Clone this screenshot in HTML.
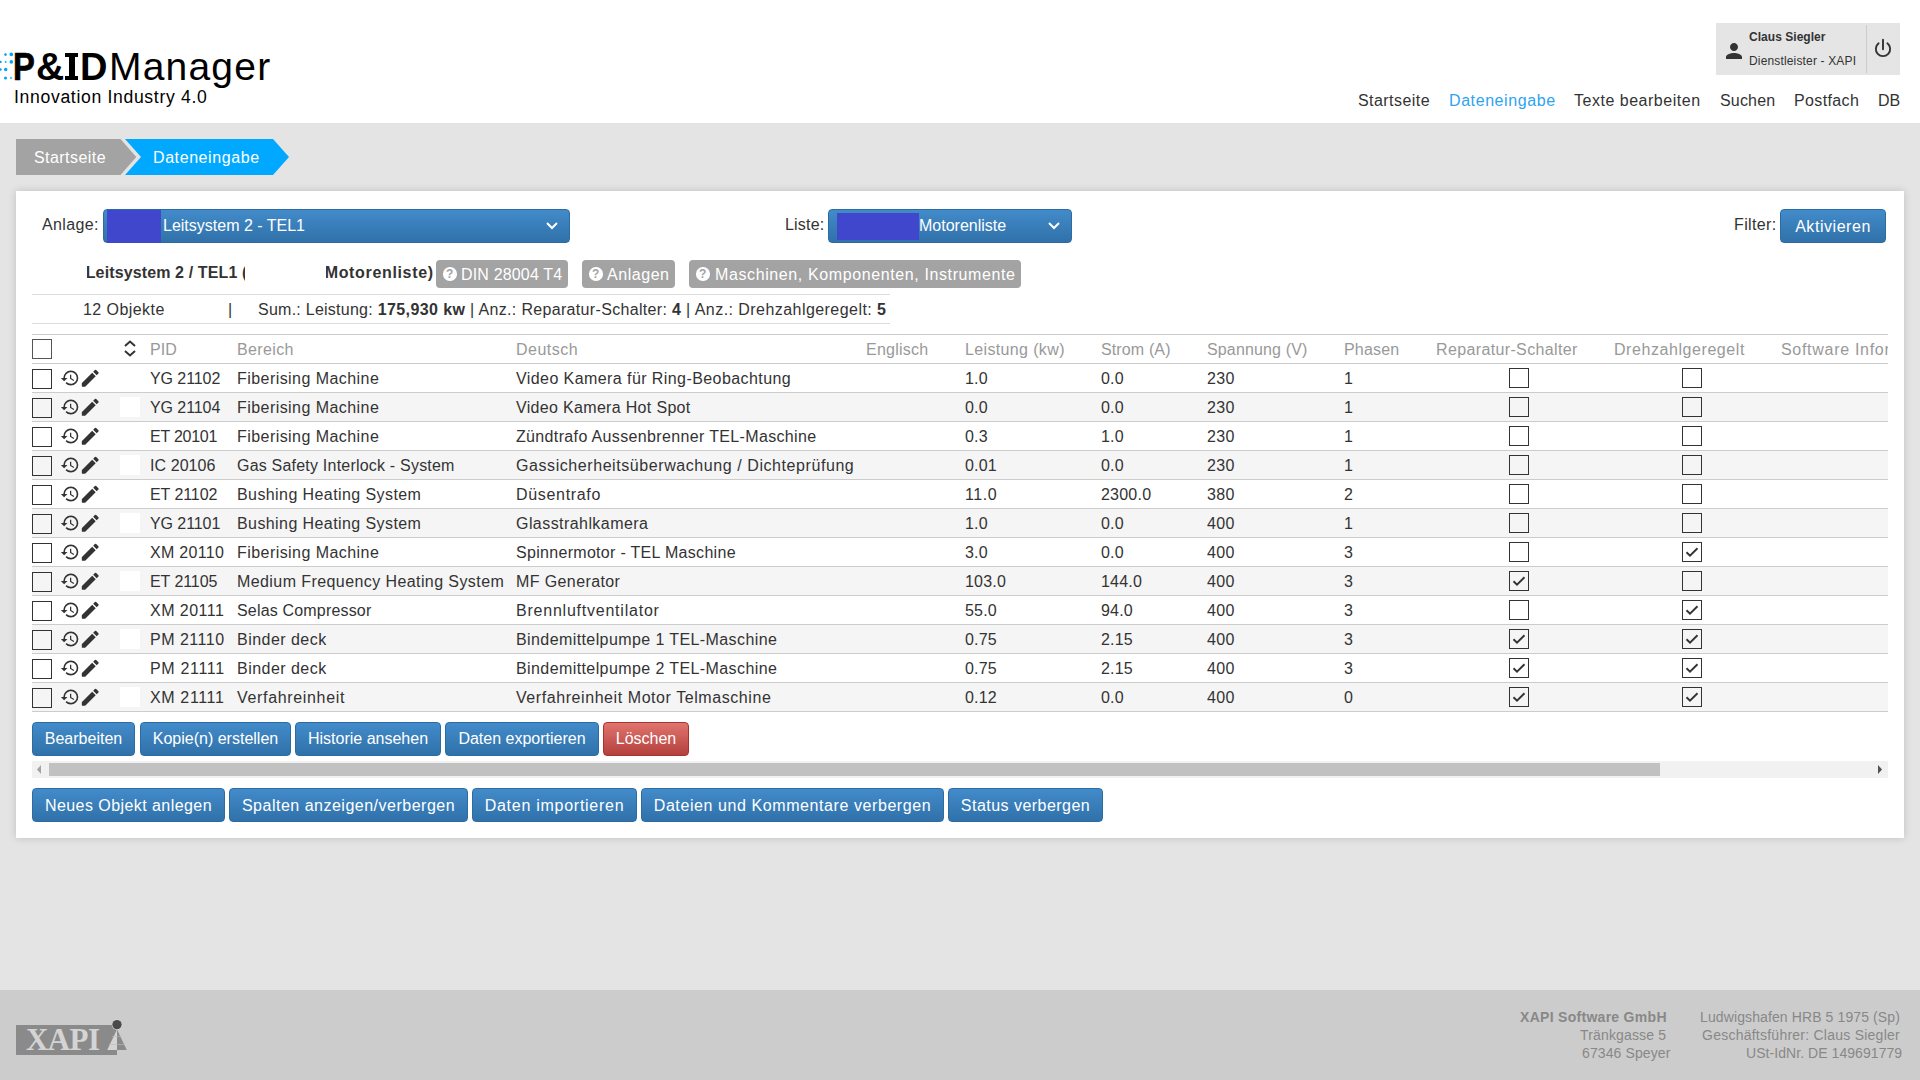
<!DOCTYPE html>
<html><head><meta charset="utf-8">
<style>
*{box-sizing:border-box;margin:0;padding:0}
html,body{width:1920px;height:1080px;overflow:hidden}
body{position:relative;background:#e4e4e4;font-family:"Liberation Sans",sans-serif;color:#333;font-size:16px}
.abs{position:absolute}
#header{position:absolute;left:0;top:0;width:1920px;height:123px;background:#fff}
.logo1{position:absolute;left:109px;top:45px;font-size:39px;line-height:44px;color:#000;white-space:nowrap}
.lg{position:absolute;top:45.3px;font-size:38px;line-height:44px;font-weight:bold;color:#000}
.logo2{position:absolute;left:14px;top:86.5px;font-size:17.6px;line-height:20px;color:#000;white-space:nowrap}
.user{position:absolute;left:1716px;top:23px;width:184px;height:52px;background:#e5e5e5}
.user .nm{position:absolute;left:33px;top:5.8px;font-size:12px;line-height:16px;color:#333;white-space:nowrap}
.user .rl{position:absolute;left:33px;top:29.7px;font-size:12px;line-height:16px;color:#333;white-space:nowrap}
.user .div{position:absolute;left:150px;top:2px;width:1px;height:48px;background:#ccc}
.nav{position:absolute;top:91px;font-size:16px;line-height:20px;color:#333;white-space:nowrap}
.bc{position:absolute;top:140px;height:36px;line-height:36px;color:#fff;font-size:16px;white-space:nowrap}
#panel{position:absolute;left:16px;top:191px;width:1888px;height:647px;background:#fff;box-shadow:0 0 8px rgba(0,0,0,.16)}
.lbl{position:absolute;font-size:16px;line-height:20px;color:#333;white-space:nowrap}
.sel{position:absolute;top:209px;height:34px;border:1px solid #2d6ca2;border-radius:4px;background:linear-gradient(#428bca,#3071a9);color:#fff;font-size:16px;line-height:32px;white-space:nowrap}
.sel .blk{position:absolute;top:0;height:32px;background:#4047cc}
.sel .chev{position:absolute;top:11px}
.btn{position:absolute;height:34px;border:1px solid #2d6ca2;border-radius:4px;background:linear-gradient(#428bca 0%,#3071a9 100%);color:#fff;font-size:16px;line-height:32px;text-align:center;white-space:nowrap}
.btn.nt{line-height:34px}
.btn.red{border-color:#a8332f;background:linear-gradient(#e0746f,#b4403c)}
.tag{position:absolute;top:260px;height:28px;background:#a3a3a3;border-radius:4px;color:#fff;font-size:16px;line-height:28px;white-space:nowrap}
.q{position:absolute;left:7px;top:7px;width:13.5px;height:13.5px;border-radius:50%;background:#fff;color:#a3a3a3;font-size:12px;line-height:14px;text-align:center;font-weight:bold}
.hl{position:absolute;height:1px;background:#ddd}
.row{position:absolute;left:32px;width:1856px;height:29px;border-bottom:1px solid #ccc;background:#fff}
.row.alt{background:#f5f5f5}
.th{position:absolute;top:336px;line-height:28px;font-size:16px;color:#999;white-space:nowrap}
.td{position:absolute;margin-top:0.7px;line-height:28px;font-size:16px;color:#333;white-space:nowrap}
.cb{position:absolute;width:20px;height:20px;border:1.5px solid #333;background:transparent}
.cb svg{position:absolute;left:-1.5px;top:-1.5px}
.ic{position:absolute}
.ic svg{display:block}
.wsq{position:absolute;left:120px;width:20px;height:20px;background:#fff}
#footer{position:absolute;left:0;top:990px;width:1920px;height:90px;background:#ccc}
.ft{position:absolute;font-size:14px;line-height:18px;color:#888;white-space:nowrap}
</style></head><body>
<div id="header">
  <svg class="abs" style="left:0;top:50px" width="14" height="32" viewBox="0 0 14 32">
    <g fill="#00a3fa">
    <circle cx="5.5" cy="4.6" r="1.3"/><circle cx="11.3" cy="4.4" r="1.8"/>
    <circle cx="0.5" cy="11.9" r="1.2"/><circle cx="5.7" cy="11.9" r="0.9"/><circle cx="11.3" cy="11.9" r="1.8"/>
    <circle cx="0.5" cy="19.5" r="1.2"/><circle cx="5.7" cy="19.5" r="1.7"/>
    <circle cx="5.5" cy="27.9" r="1.5"/><circle cx="11" cy="27.9" r="0.9"/>
    </g>
  </svg>
  <span class="lg" style="left:13.3px;transform:scaleX(0.86);transform-origin:0 0;-webkit-text-stroke:0.7px #000">P</span>
  <span class="lg" style="left:35.5px;transform:scaleX(1.03);transform-origin:0 0">&amp;</span>
  <div class="abs" style="left:65px;top:52.5px;width:13px;height:4px;background:#000"></div>
  <div class="abs" style="left:68.5px;top:52.5px;width:6px;height:27px;background:#000"></div>
  <div class="abs" style="left:65px;top:75.5px;width:13px;height:4px;background:#000"></div>
  <span class="lg" style="left:80px">D</span>
  <div class="logo1"><span style="letter-spacing:1.2px">Manager</span></div>
  <div class="logo2"><span style="letter-spacing:0.670px">Innovation Industry 4.0</span></div>
  <div class="user">
    <svg class="abs" style="left:5.8px;top:16px" width="24" height="24" viewBox="0 0 24 24"><path fill="#333" d="M12 12c2.21 0 4-1.79 4-4s-1.79-4-4-4-4 1.79-4 4 1.79 4 4 4zm0 2c-2.67 0-8 1.34-8 4v2h16v-2c0-2.66-5.33-4-8-4z"/></svg>
    <div class="nm"><span style="letter-spacing:0.036px;font-weight:700">Claus Siegler</span></div>
    <div class="rl"><span style="letter-spacing:0.157px">Dienstleister - XAPI</span></div>
    <div class="div"></div>
    <svg class="abs" style="left:155px;top:13.8px" width="24" height="24" viewBox="0 0 24 24"><path d="M7.62 6.35 A7.15 7.15 0 1 0 16.38 6.35" stroke="#333" stroke-width="1.9" fill="none" stroke-linecap="round"/><line x1="12" y1="2.6" x2="12" y2="12.2" stroke="#333" stroke-width="1.9" stroke-linecap="round"/></svg>
  </div>
  <div class="nav" style="left:1358px"><span style="letter-spacing:0.439px">Startseite</span></div>
  <div class="nav" style="left:1449px;color:#2ea3f2"><span style="letter-spacing:0.584px">Dateneingabe</span></div>
  <div class="nav" style="left:1574px"><span style="letter-spacing:0.515px">Texte bearbeiten</span></div>
  <div class="nav" style="left:1720px"><span style="letter-spacing:0.177px">Suchen</span></div>
  <div class="nav" style="left:1794px"><span style="letter-spacing:0.370px">Postfach</span></div>
  <div class="nav" style="left:1878px"><span style="letter-spacing:-0.147px">DB</span></div>
</div>
<svg class="abs" style="left:16px;top:139px" width="276" height="36" viewBox="0 0 276 36">
  <polygon points="0,0 104.5,0 120.3,18 104.5,36 0,36" fill="#a3a3a3"/>
  <polygon points="109,0 257,0 273,18 257,36 109,36 125,18" fill="#00a9ff"/>
</svg>
<div class="bc" style="left:34px"><span style="letter-spacing:0.439px">Startseite</span></div>
<div class="bc" style="left:153px"><span style="letter-spacing:0.584px">Dateneingabe</span></div>

<div id="panel"></div>
<div class="lbl" style="left:42px;top:215px"><span style="letter-spacing:0.350px">Anlage:</span></div>
<div class="sel" style="left:103px;width:467px">
  <div class="blk" style="left:2.7px;width:54.3px;top:-0.5px;height:33px"></div>
  <span class="abs" style="left:59px;top:0">Leitsystem 2 - TEL1</span>
  <svg class="chev" style="left:441px" width="14" height="10" viewBox="0 0 14 10"><path d="M2 2 L7 7 L12 2" stroke="#fff" stroke-width="2" fill="none"/></svg>
</div>
<div class="lbl" style="left:785px;top:215px"><span style="letter-spacing:0.204px">Liste:</span></div>
<div class="sel" style="left:828px;width:244px">
  <div class="blk" style="left:8px;width:82px;top:2.9px;height:27.1px"></div>
  <span class="abs" style="left:90px;top:0">Motorenliste</span>
  <svg class="chev" style="left:218px" width="14" height="10" viewBox="0 0 14 10"><path d="M2 2 L7 7 L12 2" stroke="#fff" stroke-width="2" fill="none"/></svg>
</div>
<div class="lbl" style="left:1734px;top:215px"><span style="letter-spacing:0.376px">Filter:</span></div>
<div class="btn nt" style="left:1780px;top:209px;width:106px"><span style="letter-spacing:0.545px">Aktivieren</span></div>

<div class="lbl" style="left:86.5px;top:263px;width:158px;height:22px;overflow:hidden"><span class="abs" style="left:-0.8px;top:0"><span style="letter-spacing:0.125px;font-weight:700">Leitsystem 2 / TEL1 (</span></span></div>
<div class="lbl" style="left:325.5px;top:263px;width:110px;overflow:hidden;height:22px"><span class="abs" style="left:-0.8px;top:0"><span style="letter-spacing:0.656px;font-weight:700">Motorenliste)</span></span></div>
<div class="tag" style="left:436px;width:132px"><div class="q">?</div><span class="abs" style="left:25px;top:0.5px"><span style="letter-spacing:0.162px">DIN 28004 T4</span></span></div>
<div class="tag" style="left:582px;width:93px"><div class="q">?</div><span class="abs" style="left:25px;top:0.5px"><span style="letter-spacing:0.542px">Anlagen</span></span></div>
<div class="tag" style="left:689px;width:332px"><div class="q">?</div><span class="abs" style="left:26px;top:0.5px"><span style="letter-spacing:0.610px">Maschinen, Komponenten, Instrumente</span></span></div>

<div class="hl" style="left:32px;top:294px;width:858px"></div>
<div class="hl" style="left:32px;top:323px;width:858px"></div>
<div class="lbl" style="left:83px;top:300px"><span style="letter-spacing:0.435px">12 Objekte</span></div>
<div class="lbl" style="left:228px;top:300px">|</div>
<div class="lbl" style="left:258px;top:300px"><span style="letter-spacing:0.253px">Sum.: Leistung: </span><span style="letter-spacing:0.403px;font-weight:700">175,930 kw</span><span style="letter-spacing:0.331px"> | Anz.: Reparatur-Schalter: </span><span style="letter-spacing:0.254px;font-weight:700">4</span><span style="letter-spacing:0.446px"> | Anz.: Drehzahlgeregelt: </span><span style="letter-spacing:0.254px;font-weight:700">5</span></div>

<div class="hl" style="left:32px;top:334px;width:1856px;background:#ccc"></div>
<div class="hl" style="left:32px;top:363px;width:1856px;background:#ccc"></div>
<div class="cb" style="left:32px;top:339px;border-color:#555"></div>
<svg class="abs" style="left:123px;top:340px" width="14" height="17" viewBox="0 0 14 17"><path d="M2 6 L7 1.5 L12 6 M2 11 L7 15.5 L12 11" stroke="#333" stroke-width="2" fill="none"/></svg>
<div class="th" style="left:150px"><span style="letter-spacing:0.056px">PID</span></div>
<div class="th" style="left:237px"><span style="letter-spacing:0.364px">Bereich</span></div>
<div class="th" style="left:516px"><span style="letter-spacing:0.484px">Deutsch</span></div>
<div class="th" style="left:866px"><span style="letter-spacing:0.234px">Englisch</span></div>
<div class="th" style="left:965px"><span style="letter-spacing:0.360px">Leistung (kw)</span></div>
<div class="th" style="left:1101px"><span style="letter-spacing:0.128px">Strom (A)</span></div>
<div class="th" style="left:1207px"><span style="letter-spacing:0.147px">Spannung (V)</span></div>
<div class="th" style="left:1344px"><span style="letter-spacing:0.171px">Phasen</span></div>
<div class="th" style="left:1436px"><span style="letter-spacing:0.363px">Reparatur-Schalter</span></div>
<div class="th" style="left:1614px"><span style="letter-spacing:0.566px">Drehzahlgeregelt</span></div>
<div class="th" style="left:1781px;width:107px;overflow:hidden"><span style="letter-spacing:0.703px">Software Informationen</span></div>
<div class="row" style="top:364px"></div>
<div class="cb" style="left:32px;top:369px"></div>
<div class="ic" style="left:60.1px;top:368.1px"><svg width="20" height="20" viewBox="0 0 24 24"><path fill="#333" d="M13 3a9 9 0 0 0-9 9H1l3.89 3.89.07.14L9 12H6c0-3.87 3.13-7 7-7s7 3.13 7 7-3.13 7-7 7c-1.93 0-3.68-.79-4.94-2.06l-1.42 1.42A8.954 8.954 0 0 0 13 21a9 9 0 0 0 0-18zm-1 5v5l4.28 2.54.72-1.21-3.5-2.08V8H12z"/></svg></div>
<div class="ic" style="left:79.3px;top:367.2px"><svg width="22.5" height="22.5" viewBox="0 0 24 24"><path fill="#333" d="M3 17.46v3.04c0 .28.22.5.5.5h3.04c.13 0 .26-.05.35-.15L17.81 9.94l-3.75-3.75L3.15 17.1c-.1.1-.15.22-.15.36zM20.71 7.04a1 1 0 0 0 0-1.41l-2.34-2.34a1 1 0 0 0-1.41 0l-1.83 1.83 3.75 3.75 1.83-1.83z"/></svg></div>
<div class="td" style="left:150px;top:364px"><span style="letter-spacing:-0.080px">YG 21102</span></div>
<div class="td" style="left:237px;top:364px"><span style="letter-spacing:0.443px">Fiberising Machine</span></div>
<div class="td" style="left:516px;top:364px"><span style="letter-spacing:0.422px">Video Kamera für Ring-Beobachtung</span></div>
<div class="td" style="left:965px;top:364px"><span style="letter-spacing:0.175px">1.0</span></div>
<div class="td" style="left:1101px;top:364px"><span style="letter-spacing:0.175px">0.0</span></div>
<div class="td" style="left:1207px;top:364px"><span style="letter-spacing:0.380px">230</span></div>
<div class="td" style="left:1344px;top:364px"><span style="letter-spacing:0.254px">1</span></div>
<div class="cb" style="left:1509px;top:368px"></div>
<div class="cb" style="left:1682px;top:368px"></div>
<div class="row alt" style="top:393px"></div>
<div class="cb" style="left:32px;top:398px"></div>
<div class="ic" style="left:60.1px;top:397.1px"><svg width="20" height="20" viewBox="0 0 24 24"><path fill="#333" d="M13 3a9 9 0 0 0-9 9H1l3.89 3.89.07.14L9 12H6c0-3.87 3.13-7 7-7s7 3.13 7 7-3.13 7-7 7c-1.93 0-3.68-.79-4.94-2.06l-1.42 1.42A8.954 8.954 0 0 0 13 21a9 9 0 0 0 0-18zm-1 5v5l4.28 2.54.72-1.21-3.5-2.08V8H12z"/></svg></div>
<div class="ic" style="left:79.3px;top:396.2px"><svg width="22.5" height="22.5" viewBox="0 0 24 24"><path fill="#333" d="M3 17.46v3.04c0 .28.22.5.5.5h3.04c.13 0 .26-.05.35-.15L17.81 9.94l-3.75-3.75L3.15 17.1c-.1.1-.15.22-.15.36zM20.71 7.04a1 1 0 0 0 0-1.41l-2.34-2.34a1 1 0 0 0-1.41 0l-1.83 1.83 3.75 3.75 1.83-1.83z"/></svg></div>
<div class="wsq" style="top:397px"></div>
<div class="td" style="left:150px;top:393px"><span style="letter-spacing:-0.080px">YG 21104</span></div>
<div class="td" style="left:237px;top:393px"><span style="letter-spacing:0.443px">Fiberising Machine</span></div>
<div class="td" style="left:516px;top:393px"><span style="letter-spacing:0.323px">Video Kamera Hot Spot</span></div>
<div class="td" style="left:965px;top:393px"><span style="letter-spacing:0.175px">0.0</span></div>
<div class="td" style="left:1101px;top:393px"><span style="letter-spacing:0.175px">0.0</span></div>
<div class="td" style="left:1207px;top:393px"><span style="letter-spacing:0.380px">230</span></div>
<div class="td" style="left:1344px;top:393px"><span style="letter-spacing:0.254px">1</span></div>
<div class="cb" style="left:1509px;top:397px"></div>
<div class="cb" style="left:1682px;top:397px"></div>
<div class="row" style="top:422px"></div>
<div class="cb" style="left:32px;top:427px"></div>
<div class="ic" style="left:60.1px;top:426.1px"><svg width="20" height="20" viewBox="0 0 24 24"><path fill="#333" d="M13 3a9 9 0 0 0-9 9H1l3.89 3.89.07.14L9 12H6c0-3.87 3.13-7 7-7s7 3.13 7 7-3.13 7-7 7c-1.93 0-3.68-.79-4.94-2.06l-1.42 1.42A8.954 8.954 0 0 0 13 21a9 9 0 0 0 0-18zm-1 5v5l4.28 2.54.72-1.21-3.5-2.08V8H12z"/></svg></div>
<div class="ic" style="left:79.3px;top:425.2px"><svg width="22.5" height="22.5" viewBox="0 0 24 24"><path fill="#333" d="M3 17.46v3.04c0 .28.22.5.5.5h3.04c.13 0 .26-.05.35-.15L17.81 9.94l-3.75-3.75L3.15 17.1c-.1.1-.15.22-.15.36zM20.71 7.04a1 1 0 0 0 0-1.41l-2.34-2.34a1 1 0 0 0-1.41 0l-1.83 1.83 3.75 3.75 1.83-1.83z"/></svg></div>
<div class="td" style="left:150px;top:422px"><span style="letter-spacing:-0.239px">ET 20101</span></div>
<div class="td" style="left:237px;top:422px"><span style="letter-spacing:0.443px">Fiberising Machine</span></div>
<div class="td" style="left:516px;top:422px"><span style="letter-spacing:0.351px">Zündtrafo Aussenbrenner TEL-Maschine</span></div>
<div class="td" style="left:965px;top:422px"><span style="letter-spacing:0.175px">0.3</span></div>
<div class="td" style="left:1101px;top:422px"><span style="letter-spacing:0.175px">1.0</span></div>
<div class="td" style="left:1207px;top:422px"><span style="letter-spacing:0.380px">230</span></div>
<div class="td" style="left:1344px;top:422px"><span style="letter-spacing:0.254px">1</span></div>
<div class="cb" style="left:1509px;top:426px"></div>
<div class="cb" style="left:1682px;top:426px"></div>
<div class="row alt" style="top:451px"></div>
<div class="cb" style="left:32px;top:456px"></div>
<div class="ic" style="left:60.1px;top:455.1px"><svg width="20" height="20" viewBox="0 0 24 24"><path fill="#333" d="M13 3a9 9 0 0 0-9 9H1l3.89 3.89.07.14L9 12H6c0-3.87 3.13-7 7-7s7 3.13 7 7-3.13 7-7 7c-1.93 0-3.68-.79-4.94-2.06l-1.42 1.42A8.954 8.954 0 0 0 13 21a9 9 0 0 0 0-18zm-1 5v5l4.28 2.54.72-1.21-3.5-2.08V8H12z"/></svg></div>
<div class="ic" style="left:79.3px;top:454.2px"><svg width="22.5" height="22.5" viewBox="0 0 24 24"><path fill="#333" d="M3 17.46v3.04c0 .28.22.5.5.5h3.04c.13 0 .26-.05.35-.15L17.81 9.94l-3.75-3.75L3.15 17.1c-.1.1-.15.22-.15.36zM20.71 7.04a1 1 0 0 0 0-1.41l-2.34-2.34a1 1 0 0 0-1.41 0l-1.83 1.83 3.75 3.75 1.83-1.83z"/></svg></div>
<div class="wsq" style="top:455px"></div>
<div class="td" style="left:150px;top:451px"><span style="letter-spacing:0.074px">IC 20106</span></div>
<div class="td" style="left:237px;top:451px"><span style="letter-spacing:0.207px">Gas Safety Interlock - System</span></div>
<div class="td" style="left:516px;top:451px"><span style="letter-spacing:0.573px">Gassicherheitsüberwachung / Dichteprüfung</span></div>
<div class="td" style="left:965px;top:451px"><span style="letter-spacing:0.201px">0.01</span></div>
<div class="td" style="left:1101px;top:451px"><span style="letter-spacing:0.175px">0.0</span></div>
<div class="td" style="left:1207px;top:451px"><span style="letter-spacing:0.380px">230</span></div>
<div class="td" style="left:1344px;top:451px"><span style="letter-spacing:0.254px">1</span></div>
<div class="cb" style="left:1509px;top:455px"></div>
<div class="cb" style="left:1682px;top:455px"></div>
<div class="row" style="top:480px"></div>
<div class="cb" style="left:32px;top:485px"></div>
<div class="ic" style="left:60.1px;top:484.1px"><svg width="20" height="20" viewBox="0 0 24 24"><path fill="#333" d="M13 3a9 9 0 0 0-9 9H1l3.89 3.89.07.14L9 12H6c0-3.87 3.13-7 7-7s7 3.13 7 7-3.13 7-7 7c-1.93 0-3.68-.79-4.94-2.06l-1.42 1.42A8.954 8.954 0 0 0 13 21a9 9 0 0 0 0-18zm-1 5v5l4.28 2.54.72-1.21-3.5-2.08V8H12z"/></svg></div>
<div class="ic" style="left:79.3px;top:483.2px"><svg width="22.5" height="22.5" viewBox="0 0 24 24"><path fill="#333" d="M3 17.46v3.04c0 .28.22.5.5.5h3.04c.13 0 .26-.05.35-.15L17.81 9.94l-3.75-3.75L3.15 17.1c-.1.1-.15.22-.15.36zM20.71 7.04a1 1 0 0 0 0-1.41l-2.34-2.34a1 1 0 0 0-1.41 0l-1.83 1.83 3.75 3.75 1.83-1.83z"/></svg></div>
<div class="td" style="left:150px;top:480px"><span style="letter-spacing:-0.069px">ET 21102</span></div>
<div class="td" style="left:237px;top:480px"><span style="letter-spacing:0.413px">Bushing Heating System</span></div>
<div class="td" style="left:516px;top:480px"><span style="letter-spacing:0.678px">Düsentrafo</span></div>
<div class="td" style="left:965px;top:480px"><span style="letter-spacing:0.597px">11.0</span></div>
<div class="td" style="left:1101px;top:480px"><span style="letter-spacing:0.222px">2300.0</span></div>
<div class="td" style="left:1207px;top:480px"><span style="letter-spacing:0.380px">380</span></div>
<div class="td" style="left:1344px;top:480px"><span style="letter-spacing:0.254px">2</span></div>
<div class="cb" style="left:1509px;top:484px"></div>
<div class="cb" style="left:1682px;top:484px"></div>
<div class="row alt" style="top:509px"></div>
<div class="cb" style="left:32px;top:514px"></div>
<div class="ic" style="left:60.1px;top:513.1px"><svg width="20" height="20" viewBox="0 0 24 24"><path fill="#333" d="M13 3a9 9 0 0 0-9 9H1l3.89 3.89.07.14L9 12H6c0-3.87 3.13-7 7-7s7 3.13 7 7-3.13 7-7 7c-1.93 0-3.68-.79-4.94-2.06l-1.42 1.42A8.954 8.954 0 0 0 13 21a9 9 0 0 0 0-18zm-1 5v5l4.28 2.54.72-1.21-3.5-2.08V8H12z"/></svg></div>
<div class="ic" style="left:79.3px;top:512.2px"><svg width="22.5" height="22.5" viewBox="0 0 24 24"><path fill="#333" d="M3 17.46v3.04c0 .28.22.5.5.5h3.04c.13 0 .26-.05.35-.15L17.81 9.94l-3.75-3.75L3.15 17.1c-.1.1-.15.22-.15.36zM20.71 7.04a1 1 0 0 0 0-1.41l-2.34-2.34a1 1 0 0 0-1.41 0l-1.83 1.83 3.75 3.75 1.83-1.83z"/></svg></div>
<div class="wsq" style="top:513px"></div>
<div class="td" style="left:150px;top:509px"><span style="letter-spacing:-0.080px">YG 21101</span></div>
<div class="td" style="left:237px;top:509px"><span style="letter-spacing:0.413px">Bushing Heating System</span></div>
<div class="td" style="left:516px;top:509px"><span style="letter-spacing:0.435px">Glasstrahlkamera</span></div>
<div class="td" style="left:965px;top:509px"><span style="letter-spacing:0.175px">1.0</span></div>
<div class="td" style="left:1101px;top:509px"><span style="letter-spacing:0.175px">0.0</span></div>
<div class="td" style="left:1207px;top:509px"><span style="letter-spacing:0.380px">400</span></div>
<div class="td" style="left:1344px;top:509px"><span style="letter-spacing:0.254px">1</span></div>
<div class="cb" style="left:1509px;top:513px"></div>
<div class="cb" style="left:1682px;top:513px"></div>
<div class="row" style="top:538px"></div>
<div class="cb" style="left:32px;top:543px"></div>
<div class="ic" style="left:60.1px;top:542.1px"><svg width="20" height="20" viewBox="0 0 24 24"><path fill="#333" d="M13 3a9 9 0 0 0-9 9H1l3.89 3.89.07.14L9 12H6c0-3.87 3.13-7 7-7s7 3.13 7 7-3.13 7-7 7c-1.93 0-3.68-.79-4.94-2.06l-1.42 1.42A8.954 8.954 0 0 0 13 21a9 9 0 0 0 0-18zm-1 5v5l4.28 2.54.72-1.21-3.5-2.08V8H12z"/></svg></div>
<div class="ic" style="left:79.3px;top:541.2px"><svg width="22.5" height="22.5" viewBox="0 0 24 24"><path fill="#333" d="M3 17.46v3.04c0 .28.22.5.5.5h3.04c.13 0 .26-.05.35-.15L17.81 9.94l-3.75-3.75L3.15 17.1c-.1.1-.15.22-.15.36zM20.71 7.04a1 1 0 0 0 0-1.41l-2.34-2.34a1 1 0 0 0-1.41 0l-1.83 1.83 3.75 3.75 1.83-1.83z"/></svg></div>
<div class="td" style="left:150px;top:538px"><span style="letter-spacing:0.294px">XM 20110</span></div>
<div class="td" style="left:237px;top:538px"><span style="letter-spacing:0.443px">Fiberising Machine</span></div>
<div class="td" style="left:516px;top:538px"><span style="letter-spacing:0.304px">Spinnermotor - TEL Maschine</span></div>
<div class="td" style="left:965px;top:538px"><span style="letter-spacing:0.175px">3.0</span></div>
<div class="td" style="left:1101px;top:538px"><span style="letter-spacing:0.175px">0.0</span></div>
<div class="td" style="left:1207px;top:538px"><span style="letter-spacing:0.380px">400</span></div>
<div class="td" style="left:1344px;top:538px"><span style="letter-spacing:0.254px">3</span></div>
<div class="cb" style="left:1509px;top:542px"></div>
<div class="cb" style="left:1682px;top:542px"><svg width="20" height="20" viewBox="0 0 20 20"><path d="M4.5 10.2 L8 13.6 L15.5 6.2" stroke="#333" stroke-width="1.9" fill="none"/></svg></div>
<div class="row alt" style="top:567px"></div>
<div class="cb" style="left:32px;top:572px"></div>
<div class="ic" style="left:60.1px;top:571.1px"><svg width="20" height="20" viewBox="0 0 24 24"><path fill="#333" d="M13 3a9 9 0 0 0-9 9H1l3.89 3.89.07.14L9 12H6c0-3.87 3.13-7 7-7s7 3.13 7 7-3.13 7-7 7c-1.93 0-3.68-.79-4.94-2.06l-1.42 1.42A8.954 8.954 0 0 0 13 21a9 9 0 0 0 0-18zm-1 5v5l4.28 2.54.72-1.21-3.5-2.08V8H12z"/></svg></div>
<div class="ic" style="left:79.3px;top:570.2px"><svg width="22.5" height="22.5" viewBox="0 0 24 24"><path fill="#333" d="M3 17.46v3.04c0 .28.22.5.5.5h3.04c.13 0 .26-.05.35-.15L17.81 9.94l-3.75-3.75L3.15 17.1c-.1.1-.15.22-.15.36zM20.71 7.04a1 1 0 0 0 0-1.41l-2.34-2.34a1 1 0 0 0-1.41 0l-1.83 1.83 3.75 3.75 1.83-1.83z"/></svg></div>
<div class="wsq" style="top:571px"></div>
<div class="td" style="left:150px;top:567px"><span style="letter-spacing:-0.069px">ET 21105</span></div>
<div class="td" style="left:237px;top:567px"><span style="letter-spacing:0.415px">Medium Frequency Heating System</span></div>
<div class="td" style="left:516px;top:567px"><span style="letter-spacing:0.391px">MF Generator</span></div>
<div class="td" style="left:965px;top:567px"><span style="letter-spacing:0.214px">103.0</span></div>
<div class="td" style="left:1101px;top:567px"><span style="letter-spacing:0.214px">144.0</span></div>
<div class="td" style="left:1207px;top:567px"><span style="letter-spacing:0.380px">400</span></div>
<div class="td" style="left:1344px;top:567px"><span style="letter-spacing:0.254px">3</span></div>
<div class="cb" style="left:1509px;top:571px"><svg width="20" height="20" viewBox="0 0 20 20"><path d="M4.5 10.2 L8 13.6 L15.5 6.2" stroke="#333" stroke-width="1.9" fill="none"/></svg></div>
<div class="cb" style="left:1682px;top:571px"></div>
<div class="row" style="top:596px"></div>
<div class="cb" style="left:32px;top:601px"></div>
<div class="ic" style="left:60.1px;top:600.1px"><svg width="20" height="20" viewBox="0 0 24 24"><path fill="#333" d="M13 3a9 9 0 0 0-9 9H1l3.89 3.89.07.14L9 12H6c0-3.87 3.13-7 7-7s7 3.13 7 7-3.13 7-7 7c-1.93 0-3.68-.79-4.94-2.06l-1.42 1.42A8.954 8.954 0 0 0 13 21a9 9 0 0 0 0-18zm-1 5v5l4.28 2.54.72-1.21-3.5-2.08V8H12z"/></svg></div>
<div class="ic" style="left:79.3px;top:599.2px"><svg width="22.5" height="22.5" viewBox="0 0 24 24"><path fill="#333" d="M3 17.46v3.04c0 .28.22.5.5.5h3.04c.13 0 .26-.05.35-.15L17.81 9.94l-3.75-3.75L3.15 17.1c-.1.1-.15.22-.15.36zM20.71 7.04a1 1 0 0 0 0-1.41l-2.34-2.34a1 1 0 0 0-1.41 0l-1.83 1.83 3.75 3.75 1.83-1.83z"/></svg></div>
<div class="td" style="left:150px;top:596px"><span style="letter-spacing:0.464px">XM 20111</span></div>
<div class="td" style="left:237px;top:596px"><span style="letter-spacing:0.177px">Selas Compressor</span></div>
<div class="td" style="left:516px;top:596px"><span style="letter-spacing:0.774px">Brennluftventilator</span></div>
<div class="td" style="left:965px;top:596px"><span style="letter-spacing:0.201px">55.0</span></div>
<div class="td" style="left:1101px;top:596px"><span style="letter-spacing:0.201px">94.0</span></div>
<div class="td" style="left:1207px;top:596px"><span style="letter-spacing:0.380px">400</span></div>
<div class="td" style="left:1344px;top:596px"><span style="letter-spacing:0.254px">3</span></div>
<div class="cb" style="left:1509px;top:600px"></div>
<div class="cb" style="left:1682px;top:600px"><svg width="20" height="20" viewBox="0 0 20 20"><path d="M4.5 10.2 L8 13.6 L15.5 6.2" stroke="#333" stroke-width="1.9" fill="none"/></svg></div>
<div class="row alt" style="top:625px"></div>
<div class="cb" style="left:32px;top:630px"></div>
<div class="ic" style="left:60.1px;top:629.1px"><svg width="20" height="20" viewBox="0 0 24 24"><path fill="#333" d="M13 3a9 9 0 0 0-9 9H1l3.89 3.89.07.14L9 12H6c0-3.87 3.13-7 7-7s7 3.13 7 7-3.13 7-7 7c-1.93 0-3.68-.79-4.94-2.06l-1.42 1.42A8.954 8.954 0 0 0 13 21a9 9 0 0 0 0-18zm-1 5v5l4.28 2.54.72-1.21-3.5-2.08V8H12z"/></svg></div>
<div class="ic" style="left:79.3px;top:628.2px"><svg width="22.5" height="22.5" viewBox="0 0 24 24"><path fill="#333" d="M3 17.46v3.04c0 .28.22.5.5.5h3.04c.13 0 .26-.05.35-.15L17.81 9.94l-3.75-3.75L3.15 17.1c-.1.1-.15.22-.15.36zM20.71 7.04a1 1 0 0 0 0-1.41l-2.34-2.34a1 1 0 0 0-1.41 0l-1.83 1.83 3.75 3.75 1.83-1.83z"/></svg></div>
<div class="wsq" style="top:629px"></div>
<div class="td" style="left:150px;top:625px"><span style="letter-spacing:0.507px">PM 21110</span></div>
<div class="td" style="left:237px;top:625px"><span style="letter-spacing:0.464px">Binder deck</span></div>
<div class="td" style="left:516px;top:625px"><span style="letter-spacing:0.406px">Bindemittelpumpe 1 TEL-Maschine</span></div>
<div class="td" style="left:965px;top:625px"><span style="letter-spacing:0.201px">0.75</span></div>
<div class="td" style="left:1101px;top:625px"><span style="letter-spacing:0.201px">2.15</span></div>
<div class="td" style="left:1207px;top:625px"><span style="letter-spacing:0.380px">400</span></div>
<div class="td" style="left:1344px;top:625px"><span style="letter-spacing:0.254px">3</span></div>
<div class="cb" style="left:1509px;top:629px"><svg width="20" height="20" viewBox="0 0 20 20"><path d="M4.5 10.2 L8 13.6 L15.5 6.2" stroke="#333" stroke-width="1.9" fill="none"/></svg></div>
<div class="cb" style="left:1682px;top:629px"><svg width="20" height="20" viewBox="0 0 20 20"><path d="M4.5 10.2 L8 13.6 L15.5 6.2" stroke="#333" stroke-width="1.9" fill="none"/></svg></div>
<div class="row" style="top:654px"></div>
<div class="cb" style="left:32px;top:659px"></div>
<div class="ic" style="left:60.1px;top:658.1px"><svg width="20" height="20" viewBox="0 0 24 24"><path fill="#333" d="M13 3a9 9 0 0 0-9 9H1l3.89 3.89.07.14L9 12H6c0-3.87 3.13-7 7-7s7 3.13 7 7-3.13 7-7 7c-1.93 0-3.68-.79-4.94-2.06l-1.42 1.42A8.954 8.954 0 0 0 13 21a9 9 0 0 0 0-18zm-1 5v5l4.28 2.54.72-1.21-3.5-2.08V8H12z"/></svg></div>
<div class="ic" style="left:79.3px;top:657.2px"><svg width="22.5" height="22.5" viewBox="0 0 24 24"><path fill="#333" d="M3 17.46v3.04c0 .28.22.5.5.5h3.04c.13 0 .26-.05.35-.15L17.81 9.94l-3.75-3.75L3.15 17.1c-.1.1-.15.22-.15.36zM20.71 7.04a1 1 0 0 0 0-1.41l-2.34-2.34a1 1 0 0 0-1.41 0l-1.83 1.83 3.75 3.75 1.83-1.83z"/></svg></div>
<div class="td" style="left:150px;top:654px"><span style="letter-spacing:0.677px">PM 21111</span></div>
<div class="td" style="left:237px;top:654px"><span style="letter-spacing:0.464px">Binder deck</span></div>
<div class="td" style="left:516px;top:654px"><span style="letter-spacing:0.406px">Bindemittelpumpe 2 TEL-Maschine</span></div>
<div class="td" style="left:965px;top:654px"><span style="letter-spacing:0.201px">0.75</span></div>
<div class="td" style="left:1101px;top:654px"><span style="letter-spacing:0.201px">2.15</span></div>
<div class="td" style="left:1207px;top:654px"><span style="letter-spacing:0.380px">400</span></div>
<div class="td" style="left:1344px;top:654px"><span style="letter-spacing:0.254px">3</span></div>
<div class="cb" style="left:1509px;top:658px"><svg width="20" height="20" viewBox="0 0 20 20"><path d="M4.5 10.2 L8 13.6 L15.5 6.2" stroke="#333" stroke-width="1.9" fill="none"/></svg></div>
<div class="cb" style="left:1682px;top:658px"><svg width="20" height="20" viewBox="0 0 20 20"><path d="M4.5 10.2 L8 13.6 L15.5 6.2" stroke="#333" stroke-width="1.9" fill="none"/></svg></div>
<div class="row alt" style="top:683px"></div>
<div class="cb" style="left:32px;top:688px"></div>
<div class="ic" style="left:60.1px;top:687.1px"><svg width="20" height="20" viewBox="0 0 24 24"><path fill="#333" d="M13 3a9 9 0 0 0-9 9H1l3.89 3.89.07.14L9 12H6c0-3.87 3.13-7 7-7s7 3.13 7 7-3.13 7-7 7c-1.93 0-3.68-.79-4.94-2.06l-1.42 1.42A8.954 8.954 0 0 0 13 21a9 9 0 0 0 0-18zm-1 5v5l4.28 2.54.72-1.21-3.5-2.08V8H12z"/></svg></div>
<div class="ic" style="left:79.3px;top:686.2px"><svg width="22.5" height="22.5" viewBox="0 0 24 24"><path fill="#333" d="M3 17.46v3.04c0 .28.22.5.5.5h3.04c.13 0 .26-.05.35-.15L17.81 9.94l-3.75-3.75L3.15 17.1c-.1.1-.15.22-.15.36zM20.71 7.04a1 1 0 0 0 0-1.41l-2.34-2.34a1 1 0 0 0-1.41 0l-1.83 1.83 3.75 3.75 1.83-1.83z"/></svg></div>
<div class="wsq" style="top:687px"></div>
<div class="td" style="left:150px;top:683px"><span style="letter-spacing:0.633px">XM 21111</span></div>
<div class="td" style="left:237px;top:683px"><span style="letter-spacing:0.668px">Verfahreinheit</span></div>
<div class="td" style="left:516px;top:683px"><span style="letter-spacing:0.570px">Verfahreinheit Motor Telmaschine</span></div>
<div class="td" style="left:965px;top:683px"><span style="letter-spacing:0.201px">0.12</span></div>
<div class="td" style="left:1101px;top:683px"><span style="letter-spacing:0.175px">0.0</span></div>
<div class="td" style="left:1207px;top:683px"><span style="letter-spacing:0.380px">400</span></div>
<div class="td" style="left:1344px;top:683px"><span style="letter-spacing:0.254px">0</span></div>
<div class="cb" style="left:1509px;top:687px"><svg width="20" height="20" viewBox="0 0 20 20"><path d="M4.5 10.2 L8 13.6 L15.5 6.2" stroke="#333" stroke-width="1.9" fill="none"/></svg></div>
<div class="cb" style="left:1682px;top:687px"><svg width="20" height="20" viewBox="0 0 20 20"><path d="M4.5 10.2 L8 13.6 L15.5 6.2" stroke="#333" stroke-width="1.9" fill="none"/></svg></div>

<div class="btn" style="left:32px;top:722px;width:103px">Bearbeiten</div>
<div class="btn" style="left:140px;top:722px;width:151px">Kopie(n) erstellen</div>
<div class="btn" style="left:295px;top:722px;width:146px">Historie ansehen</div>
<div class="btn" style="left:445px;top:722px;width:154px">Daten exportieren</div>
<div class="btn red" style="left:603px;top:722px;width:86px">Löschen</div>

<div class="abs" style="left:32px;top:761px;width:1856px;height:17px;background:#f1f1f1"></div>
<div class="abs" style="left:49px;top:763px;width:1611px;height:13px;background:#c1c1c1"></div>
<svg class="abs" style="left:36px;top:765px" width="6" height="9"><path d="M5 0 L1 4.5 L5 9Z" fill="#a3a3a3"/></svg>
<svg class="abs" style="left:1877px;top:765px" width="6" height="9"><path d="M1 0 L5 4.5 L1 9Z" fill="#505050"/></svg>

<div class="btn nt" style="left:32px;top:788px;width:193px"><span style="letter-spacing:0.438px">Neues Objekt anlegen</span></div>
<div class="btn nt" style="left:229px;top:788px;width:239px"><span style="letter-spacing:0.500px">Spalten anzeigen/verbergen</span></div>
<div class="btn nt" style="left:472px;top:788px;width:165px"><span style="letter-spacing:0.730px">Daten importieren</span></div>
<div class="btn nt" style="left:641px;top:788px;width:303px"><span style="letter-spacing:0.583px">Dateien und Kommentare verbergen</span></div>
<div class="btn nt" style="left:948px;top:788px;width:155px"><span style="letter-spacing:0.466px">Status verbergen</span></div>

<div id="footer"></div>
<svg class="abs" style="left:0;top:1010px" width="140" height="55" viewBox="0 0 140 55">
  <rect x="16" y="15" width="101" height="30" fill="#8a8a8a"/>
  <polygon points="117,19.6 107.2,40 117,40" fill="#d4d4d4"/>
  <polygon points="117,19.6 126.8,40 117,40" fill="#8a8a8a"/>
  <line x1="112" y1="26.4" x2="122" y2="26.4" stroke="#bbb" stroke-width="0.6"/>
  <line x1="109" y1="34.5" x2="125" y2="34.5" stroke="#bbb" stroke-width="0.6"/>
  <text x="26" y="40" font-family="Liberation Serif" font-weight="bold" font-size="31" fill="#d4d4d4" letter-spacing="-0.6">XAPI</text>
  <circle cx="117" cy="14.6" r="5.2" fill="#e8e8e8"/>
  <circle cx="117" cy="14.6" r="4.7" fill="#4a4a4a"/>
</svg>
<div class="ft" style="left:1520px;top:1008px"><span style="letter-spacing:0.289px;font-weight:700">XAPI Software GmbH</span></div>
<div class="ft" style="left:1580px;top:1026px"><span style="letter-spacing:0.153px">Tränkgasse 5</span></div>
<div class="ft" style="left:1582px;top:1044px"><span style="letter-spacing:0.112px">67346 Speyer</span></div>
<div class="ft" style="left:1700px;top:1008px"><span style="letter-spacing:0.110px">Ludwigshafen HRB 5 1975 (Sp)</span></div>
<div class="ft" style="left:1702px;top:1026px"><span style="letter-spacing:0.243px">Geschäftsführer: Claus Siegler</span></div>
<div class="ft" style="left:1746px;top:1044px"><span style="letter-spacing:0.060px">USt-IdNr. DE 149691779</span></div>
</body></html>
